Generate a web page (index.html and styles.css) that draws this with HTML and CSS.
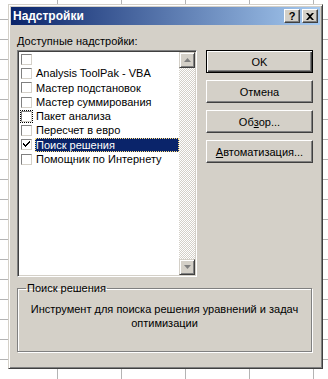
FILE: index.html
```html
<!DOCTYPE html>
<html lang="ru">
<head>
    <meta charset="UTF-8">
    <title>Надстройки</title>
    <link rel="stylesheet" href="styles.css">
</head>
<body>
    <div class="window">
        <div class="titlebar">
            <span class="title">Надстройки</span>
            <div class="caption-btns">
                <span class="cap-btn help">?</span>
                <span class="cap-btn">
                    <svg width="8" height="7" viewBox="0 0 8 7"><path d="M0 0h2l2 2 2-2h2L5 3.5 8 7H6L4 5 2 7H0l3-3.5z" fill="#000"/></svg>
                </span>
            </div>
        </div>
        <div class="dialog-body">
            <div class="label"><u>Д</u>оступные надстройки:</div>
            <div class="main-row">
                <div class="listbox">
                    <ul class="items">
                        <li class="item"><span class="check"></span><span class="text"></span></li>
                        <li class="item"><span class="check"></span><span class="text">Analysis ToolPak - VBA</span></li>
                        <li class="item"><span class="check"></span><span class="text">Мастер подстановок</span></li>
                        <li class="item"><span class="check"></span><span class="text">Мастер суммирования</span></li>
                        <li class="item"><span class="check focus"></span><span class="text">Пакет анализа</span></li>
                        <li class="item"><span class="check"></span><span class="text">Пересчет в евро</span></li>
                        <li class="item selected"><span class="check checked">
                            <svg width="7" height="7" viewBox="0 0 7 7"><path d="M0 2h1v1h1v1h1V3h1V2h1V1h1V0h1v2H6v1H5v1H4v1H3v1H2V5H1V4H0z" fill="#000"/></svg>
                        </span><span class="text">Поиск решения</span></li>
                        <li class="item"><span class="check"></span><span class="text">Помощник по Интернету</span></li>
                    </ul>
                    <div class="scrollbar">
                        <div class="arrow"><svg width="7" height="4" viewBox="0 0 7 4"><path d="M3.5 0L7 4H0z" fill="#808080"/></svg></div>
                        <div class="track"></div>
                        <div class="arrow"><svg width="7" height="4" viewBox="0 0 7 4"><path d="M0 0h7L3.5 4z" fill="#808080"/></svg></div>
                    </div>
                </div>
                <div class="buttons">
                    <div class="btn default">OK</div>
                    <div class="btn">Отмена</div>
                    <div class="btn">Об<u>з</u>ор...</div>
                    <div class="btn"><u>А</u>втоматизация...</div>
                </div>
            </div>
            <fieldset class="group">
                <legend>Поиск решения</legend>
                <p class="desc">Инструмент для поиска решения уравнений и задач оптимизации</p>
            </fieldset>
        </div>
    </div>
</body>
</html>
```

FILE: styles.css
```css
html, body {
    margin: 0;
    height: 100%;
}
body {
    padding: 4px 0 0 8px;
    box-sizing: border-box;
    font-family: "Liberation Sans", Arial, sans-serif;
    font-size: 11px;
    color: #000;
    background-color: #fff;
    background-image:
        linear-gradient(#b4b4b4 1px, transparent 1px),
        linear-gradient(90deg, #b4b4b4 1px, transparent 1px);
    background-size: 100% 20px, 64px 100%;
    background-position: 0 19px, 57px 0;
}
.window {
    width: 315px;
    height: 365px;
    box-sizing: border-box;
    padding: 2px;
    background: #d4d0c8;
    border: 1px solid;
    border-color: #d4d0c8 #404040 #404040 #d4d0c8;
    box-shadow: inset 1px 1px 0 #fff, inset -1px -1px 0 #808080;
    display: flex;
    flex-direction: column;
}
.titlebar {
    height: 18px;
    display: flex;
    align-items: center;
    justify-content: space-between;
    padding: 0 2px 0 2px;
    background: linear-gradient(90deg, #0a246a, #a6caf0);
}
.title {
    color: #fff;
    font-weight: bold;
    font-size: 12px;
}
.caption-btns {
    display: flex;
    gap: 2px;
}
.cap-btn {
    width: 16px;
    height: 14px;
    box-sizing: border-box;
    background: #d4d0c8;
    border: 1px solid;
    border-color: #fff #404040 #404040 #fff;
    box-shadow: inset -1px -1px 0 #808080;
    display: flex;
    align-items: center;
    justify-content: center;
}
.cap-btn.help {
    font-weight: bold;
    font-size: 11px;
    line-height: 1;
}
.dialog-body {
    flex: 1;
    padding: 10px 7px 0 6px;
}
.label {
    height: 13px;
    line-height: 13px;
    margin-bottom: 2px;
}
.main-row {
    display: flex;
    gap: 9px;
}
.listbox {
    width: 180px;
    height: 227px;
    box-sizing: border-box;
    display: flex;
    background: #fff;
    border: 1px solid;
    border-color: #808080 #fff #fff #808080;
    box-shadow: inset 1px 1px 0 #404040, inset -1px -1px 0 #d4d0c8;
    padding: 1px;
}
.items {
    flex: 1;
    list-style: none;
    margin: 0;
    padding: 0;
}
.item {
    height: 14.3px;
    display: flex;
    align-items: center;
    white-space: nowrap;
}
.check {
    width: 11px;
    height: 11px;
    box-sizing: border-box;
    margin: 0 3px 0 2px;
    border: 1px solid;
    border-color: #808080 #d4d0c8 #d4d0c8 #808080;
    background: #fff;
    display: flex;
    align-items: center;
    justify-content: center;
    flex-shrink: 0;
}
.check.focus {
    outline: 1px dotted #000;
}
.text {
    flex: 1;
    height: 100%;
    line-height: 14px;
    padding-left: 1px;
}
.selected .text {
    background: #0a246a;
    color: #fff;
    outline: 1px dotted #ffe080;
    outline-offset: -1px;
}
.scrollbar {
    width: 16px;
    display: flex;
    flex-direction: column;
}
.arrow {
    height: 16px;
    box-sizing: border-box;
    background: #d4d0c8;
    border: 1px solid;
    border-color: #d4d0c8 #404040 #404040 #d4d0c8;
    box-shadow: inset 1px 1px 0 #fff, inset -1px -1px 0 #808080;
    display: flex;
    align-items: center;
    justify-content: center;
}
.track {
    flex: 1;
    background-image: conic-gradient(#fff 25%, #d4d0c8 0 50%, #fff 0 75%, #d4d0c8 0);
    background-size: 2px 2px;
}
.buttons {
    display: flex;
    flex-direction: column;
    gap: 7px;
}
.btn {
    width: 107px;
    height: 23px;
    box-sizing: border-box;
    background: #d4d0c8;
    border: 1px solid;
    border-color: #fff #404040 #404040 #fff;
    box-shadow: inset -1px -1px 0 #808080;
    display: flex;
    align-items: center;
    justify-content: center;
}
.btn.default {
    border-color: #000;
    box-shadow: inset 1px 1px 0 #fff, inset -1px -1px 0 #404040, inset -2px -2px 0 #808080;
}
.group {
    margin: 5px 1px 0 0;
    height: 70px;
    box-sizing: border-box;
    padding: 8px 4px 0;
    border: 1px solid #808080;
    box-shadow: 1px 1px 0 #fff, inset 1px 1px 0 #fff;
}
.group legend {
    padding: 0 1px;
    margin-left: 4px;
}
.desc {
    margin: 0;
    text-align: center;
    line-height: 14px;
}
```
